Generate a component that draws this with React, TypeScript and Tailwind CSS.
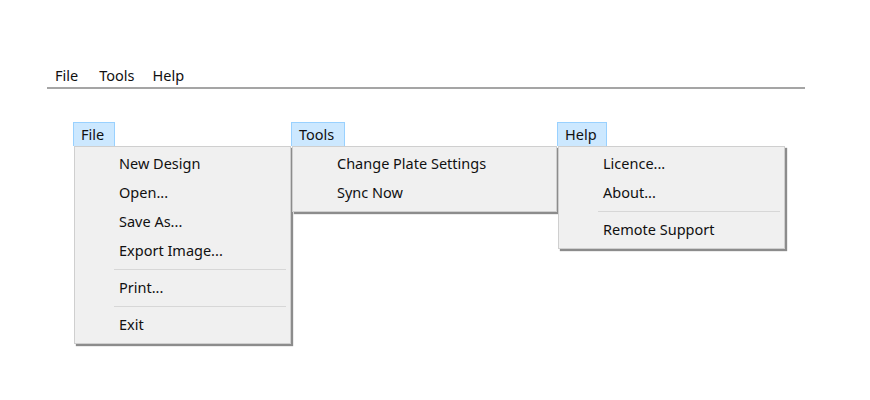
import React from "react";

type Entry = { label: string } | "sep";

const MENUS: { title: string; width: string; headWidth: string; items: Entry[] }[] = [
  {
    title: "File",
    width: "w-[217px]",
    headWidth: "w-[42px]",
    items: [
      { label: "New Design" },
      { label: "Open..." },
      { label: "Save As..." },
      { label: "Export Image..." },
      "sep",
      { label: "Print..." },
      "sep",
      { label: "Exit" },
    ],
  },
  {
    title: "Tools",
    width: "w-[265px]",
    headWidth: "w-[54px]",
    items: [{ label: "Change Plate Settings" }, { label: "Sync Now" }],
  },
  {
    title: "Help",
    width: "w-[227px]",
    headWidth: "w-[50px]",
    items: [{ label: "Licence..." }, { label: "About..." }, "sep", { label: "Remote Support" }],
  },
];

const DropMenu: React.FC<{ menu: (typeof MENUS)[number] }> = ({ menu }) => {
  return (
    <div className="flex flex-col">
      <div
        className={`${menu.headWidth} h-[24px] bg-[#cce8ff] border border-[#99d1ff] border-b-0 pl-[7px] leading-[23px] text-[#111]`}
      >
        {menu.title}
      </div>
      <div
        className={`${menu.width} ml-[1px] bg-[#f0f0f0] border border-[#cfcfcf] pt-[2px] pb-[4px] shadow-[2px_2px_1px_rgba(0,0,0,0.45)]`}
      >
        {menu.items.map((it, i) =>
          it === "sep" ? (
            <div key={i} className="h-[8px] flex items-center pl-[39px] pr-[4px]">
              <div className="h-px w-full bg-[#d7d7d7]" />
            </div>
          ) : (
            <div key={i} className="h-[29px] flex items-center pl-[44px] pt-[1px] text-[#111]">
              {it.label}
            </div>
          )
        )}
      </div>
    </div>
  );
};

export default function App() {
  return (
    <div
      className="w-[870px] h-[400px] bg-white text-[14.5px] overflow-hidden"
      style={{ fontFamily: '"Noto Sans", "Open Sans", sans-serif' }}
    >
      <div className="pt-[64px] pl-[47px]">
        <div className="w-[758px] border-b-2 border-[#a5a5a5]">
          <div className="flex pl-[8px] h-[23px] items-center text-[#111]">
            <span className="mr-[21px]">File</span>
            <span className="mr-[18px]">Tools</span>
            <span>Help</span>
          </div>
        </div>
      </div>
      <div className="flex items-start mt-[33px] pl-[73px]">
        <DropMenu menu={MENUS[0]} />
        <DropMenu menu={MENUS[1]} />
        <DropMenu menu={MENUS[2]} />
      </div>
    </div>
  );
}
